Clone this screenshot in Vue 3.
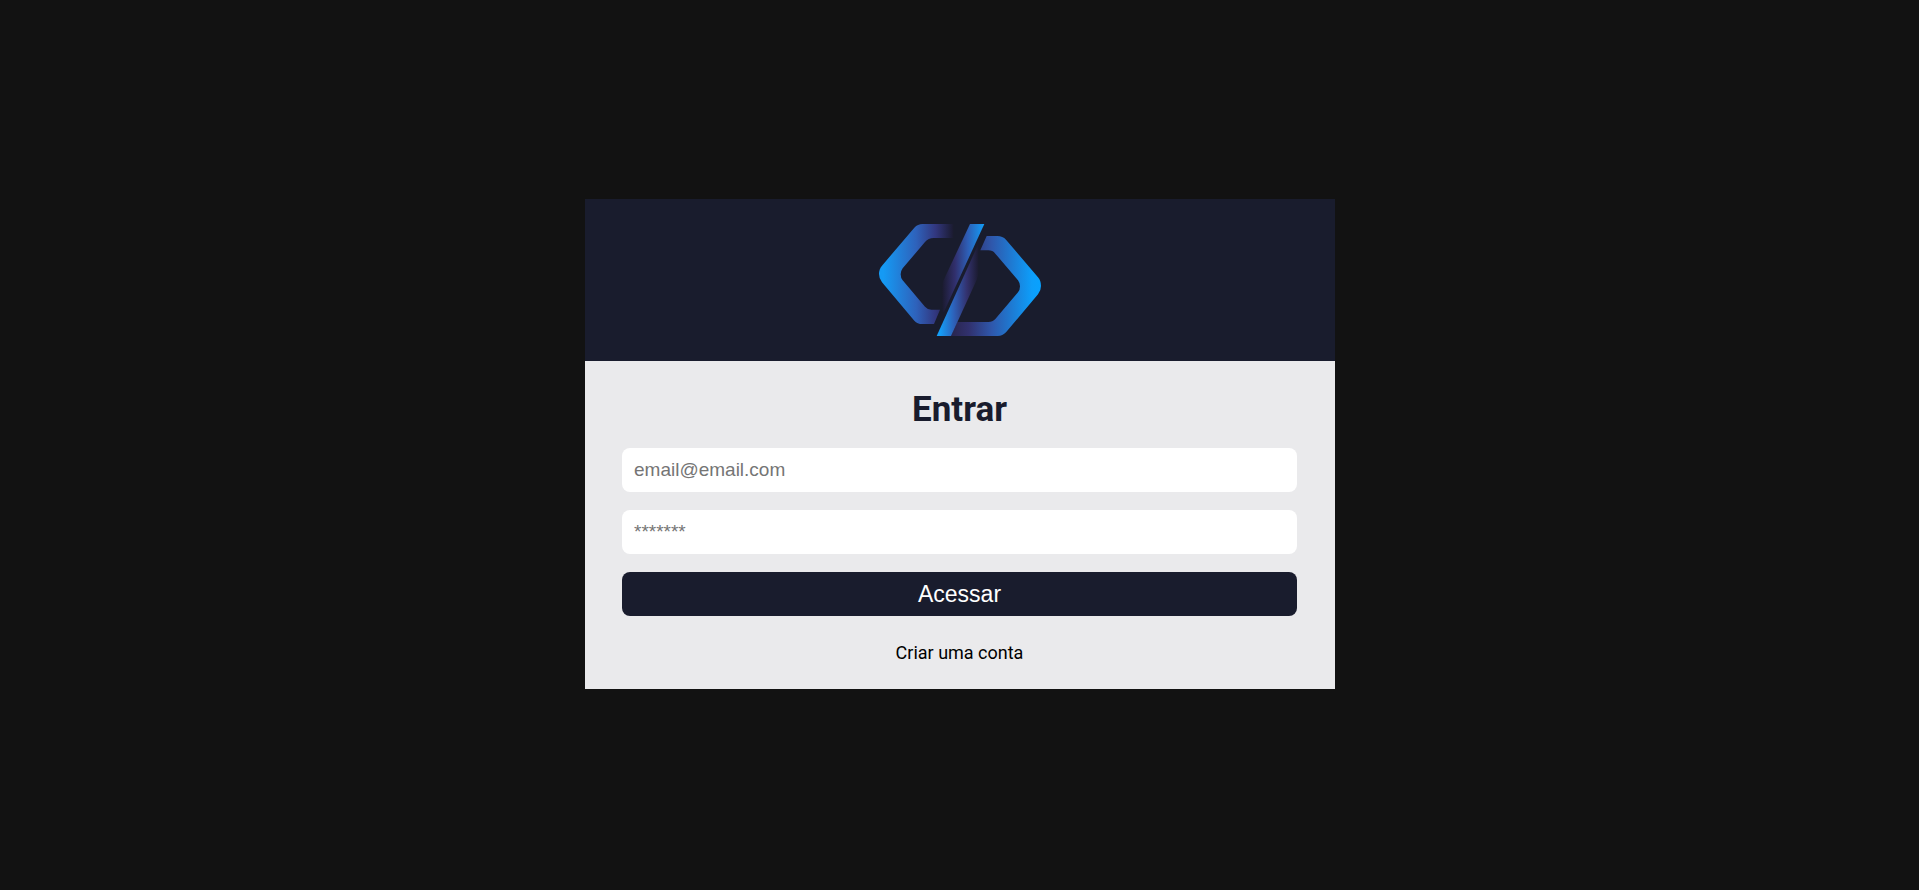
<script setup>
import { ref } from 'vue'

const email = ref('')
const password = ref('')
</script>

<template>
  <main class="page">
    <section class="card">
      <header class="banner">
        <svg class="logo" viewBox="57 42 486 336" role="img" aria-label="Logo">
          <defs>
            <linearGradient id="left-hex" gradientUnits="userSpaceOnUse" x1="57" y1="0" x2="280" y2="0">
              <stop offset="0.06" stop-color="#159af4" />
              <stop offset="0.5" stop-color="#2e62bb" />
              <stop offset="0.76" stop-color="#32377f" />
              <stop offset="1" stop-color="#1b1b30" />
            </linearGradient>
            <linearGradient id="slash-top" gradientUnits="userSpaceOnUse" x1="247" y1="0" x2="373" y2="0">
              <stop offset="0" stop-color="#1b1b30" />
              <stop offset="0.3" stop-color="#312f6c" />
              <stop offset="0.6" stop-color="#2e5db4" />
              <stop offset="1" stop-color="#129ef8" />
            </linearGradient>
            <linearGradient id="slash-bottom" gradientUnits="userSpaceOnUse" x1="230" y1="0" x2="355" y2="0">
              <stop offset="0.08" stop-color="#149ef8" />
              <stop offset="0.42" stop-color="#2e60b8" />
              <stop offset="0.72" stop-color="#33326f" />
              <stop offset="1" stop-color="#1b1b30" />
            </linearGradient>
            <linearGradient id="right-hex" gradientUnits="userSpaceOnUse" x1="273" y1="0" x2="543" y2="0">
              <stop offset="0" stop-color="#29254d" />
              <stop offset="0.2" stop-color="#31316e" />
              <stop offset="0.45" stop-color="#2f57ab" />
              <stop offset="0.9" stop-color="#0d9efa" />
              <stop offset="1" stop-color="#08a2ff" />
            </linearGradient>
          </defs>
          <path
            fill="url(#left-hex)"
            d="M280 42H188Q173 42 163 53L66 167Q57 177 57 192Q57 206 66 217L163 332Q172 342 187 342H222L240 299H214Q203 299 195 290L128 211Q122 204 122 193Q122 183 128 175L195 96Q205 84 221 84H280Z"
          />
          <path
            fill="url(#right-hex)"
            d="M380 78H412Q428 78 438 89L534 202Q543 212 543 228Q543 242 534 253L438 367Q428 378 413 378H273L292 336H385Q398 336 406 327L474 247Q480 240 480 229Q480 219 474 211L406 131Q398 121 385 121H361Z"
          />
          <path fill="url(#slash-top)" d="M330 42H373L252 305H247V228Q247 219 251 210Z" />
          <path fill="url(#slash-bottom)" d="M230 378H273L350 210Q355 199 355 188V102Z" />
        </svg>
      </header>

      <h1 class="title">Entrar</h1>

      <form class="form" @submit.prevent>
        <input v-model="email" class="field" type="email" placeholder="email@email.com" aria-label="Email" />
        <input v-model="password" class="field" type="password" placeholder="*******" aria-label="Senha" />
        <button class="submit" type="submit">Acessar</button>
      </form>

      <a class="register" href="#">Criar uma conta</a>
    </section>
  </main>
</template>

<style>
body {
  margin: 0;
  background: #121212;
}
</style>

<style scoped>
.page {
  box-sizing: border-box;
  display: flex;
  align-items: center;
  justify-content: center;
  min-height: 100vh;
  padding-bottom: 2px;
  background: #121212;
  font-family: Roboto, sans-serif;
}

.card {
  display: flex;
  flex-direction: column;
  align-items: center;
  width: 100%;
  max-width: 750px;
  background: #eaeaec;
}

.banner {
  display: flex;
  justify-content: center;
  width: 100%;
  padding: 25px 0;
  background: #191c2d;
}

.logo {
  display: block;
  width: 162px;
  height: 112px;
}

.title {
  margin: 29px 0 18px;
  color: #191c2d;
  font-size: 35px;
  line-height: 40px;
  font-weight: 700;
}

.form {
  display: flex;
  flex-direction: column;
  gap: 18px;
  width: 90%;
}

.field,
.submit {
  box-sizing: border-box;
  width: 100%;
  height: 44px;
  border: 0;
  border-radius: 8px;
  font-family: "Liberation Sans", Arial, sans-serif;
}

.field {
  padding: 0 12px;
  background: #fff;
  color: #121212;
  font-size: 19px;
}

.field::placeholder {
  color: #757575;
}

.submit {
  padding: 0;
  background: #191c2d;
  color: #fff;
  font-size: 23px;
  cursor: pointer;
}

.register {
  margin: 26px 0 25px;
  color: #000;
  font-size: 18px;
  line-height: 22px;
  text-decoration: none;
}
</style>
